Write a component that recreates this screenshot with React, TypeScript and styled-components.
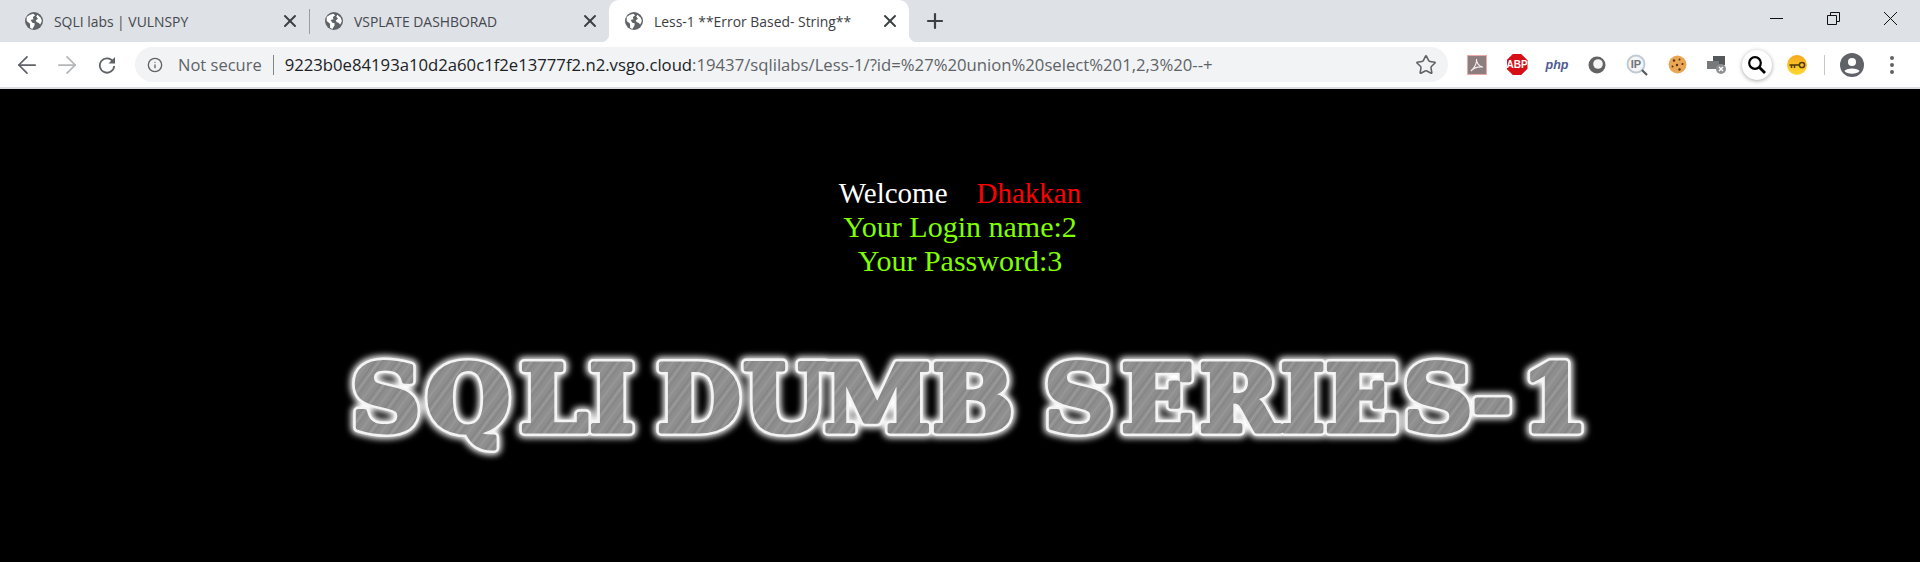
import styled, { createGlobalStyle } from 'styled-components'
import { ArrowLeft, ArrowRight, Info, Star, X, Plus } from 'lucide-react'

const GlobalStyle = createGlobalStyle`
  html, body {
    margin: 0;
    padding: 0;
    background: #000;
  }
`;

// Globe favicon chrome shows for pages without one
function Globe() {
  return (
    <svg width="18" height="18" viewBox="0 0 16 16">
      <circle cx="8" cy="8" r="8" fill="#5f6368" />
      <path d="M1.5 4.5 L4.5 2.5 L7.5 1.5 L9 3 L7 4.5 L7.5 6.5 L5 7 L6.5 9.5 L8.5 10 L8.5 12 L6.5 15 L4.5 14 L4.5 10.5 L1.5 8 Z" fill="#fff" />
      <path d="M11 2.5 L14 5 L15 8 L13.5 11 L12 9.5 L10.5 9 L9.5 7.5 L11.5 6 L10 4 Z" fill="#fff" />
    </svg>
  )
}

const tabs = [
  { title: 'SQLI labs | VULNSPY', active: false },
  { title: 'VSPLATE DASHBORAD', active: false },
  { title: 'Less-1 **Error Based- String**', active: true },
]

// glyph left edges measured off the screenshot, relative to the banner.
// the wordmark is wider than the font, so the text gets stretched a bit
const stretch = 1.05
const xs = [41, 116, 210, 279, 0, 347, 433, 514, 622, 0, 734, 811, 889, 970, 1015, 1093, 1162, 1211]
  .map(x => (x / stretch).toFixed(1))
  .join(' ')
const bannerTransform = `scale(${stretch} 1)`

function App() {
  return (
    <>
      <GlobalStyle />
      <Page>
        <TabStrip>
          {tabs.map((tab, i) => (
            <Tab key={tab.title} $active={tab.active} $divider={i === 1}>
              <Globe />
              <TabTitle $active={tab.active}>{tab.title}</TabTitle>
              <TabClose><X size={20} strokeWidth={2.4} /></TabClose>
            </Tab>
          ))}
          <NewTab><Plus size={24} strokeWidth={2.2} /></NewTab>
          <WindowControls>
            <WindowButton>
              <svg width="13" height="13" viewBox="0 0 13 13"><path d="M0 6.5 H13" stroke="#111" fill="none" /></svg>
            </WindowButton>
            <WindowButton>
              <svg width="13" height="13" viewBox="0 0 13 13"><path d="M0.5 3.5 H9.5 V12.5 H0.5 Z M3.5 3.5 V0.5 H12.5 V9.5 H9.5" stroke="#111" fill="none" /></svg>
            </WindowButton>
            <WindowButton>
              <svg width="13" height="13" viewBox="0 0 13 13"><path d="M0 0 L13 13 M13 0 L0 13" stroke="#111" fill="none" /></svg>
            </WindowButton>
          </WindowControls>
        </TabStrip>
        <Toolbar>
          <NavButton><ArrowLeft size={28} strokeWidth={1.5} /></NavButton>
          <NavButton $disabled><ArrowRight size={28} strokeWidth={1.5} /></NavButton>
          <NavButton>
            <svg width="18" height="18" viewBox="0 0 18 18">
              <path d="M15 5.5 A7.2 7.2 0 1 0 16.2 10" fill="none" stroke="currentColor" strokeWidth="1.8" />
              <path d="M17 1 V7.5 H10.5 Z" fill="currentColor" />
            </svg>
          </NavButton>
          <Omnibox>
            <Info size={16} strokeWidth={2} color="#5f6368" />
            <NotSecure>Not secure</NotSecure>
            <Sep />
            <Url>
              <b>9223b0e84193a10d2a60c1f2e13777f2.n2.vsgo.cloud</b>:19437/sqlilabs/Less-1/?id=%27%20union%20select%201,2,3%20--+
            </Url>
            <Star size={22} strokeWidth={1.7} color="#5f6368" />
          </Omnibox>
          <Extensions>
            <ExtSlot>
              <PdfIcon>
                <svg width="18" height="18" viewBox="0 0 18 18"><path d="M3 15 C6 12 9 7 8.5 3 C8 6 11 11 15 11 C11 10.5 6 11.5 3 15 Z" fill="none" stroke="#f2eeee" strokeWidth="1.1" /></svg>
              </PdfIcon>
            </ExtSlot>
            <ExtSlot><AbpIcon>ABP</AbpIcon></ExtSlot>
            <ExtSlot><PhpIcon>php</PhpIcon></ExtSlot>
            <ExtSlot>
              <svg width="18" height="18" viewBox="0 0 18 18">
                <circle cx="9" cy="9" r="8.5" fill="#636363" />
                <circle cx="10" cy="8" r="4.8" fill="#f5f5f5" />
              </svg>
            </ExtSlot>
            <ExtSlot>
              <svg width="22" height="22" viewBox="0 0 22 22">
                <circle cx="10" cy="10" r="8.5" fill="#f3f5f6" stroke="#bfcad3" strokeWidth="2" />
                <path d="M16 16 L21 21" stroke="#55595c" strokeWidth="2.2" />
                <IpLabel x="10" y="14">IP</IpLabel>
              </svg>
            </ExtSlot>
            <ExtSlot>
              <svg width="19" height="19" viewBox="0 0 19 19">
                <circle cx="9.5" cy="9.5" r="9" fill="#e9a653" />
                <circle cx="6" cy="5.5" r="1.2" fill="#5a330f" />
                <circle cx="11.5" cy="4.5" r="1" fill="#5a330f" />
                <circle cx="14.5" cy="9" r="1.1" fill="#5a330f" />
                <circle cx="9" cy="10" r="1.2" fill="#5a330f" />
                <circle cx="4.5" cy="11.5" r="1" fill="#5a330f" />
                <circle cx="11.5" cy="14.5" r="1.2" fill="#5a330f" />
              </svg>
            </ExtSlot>
            <ExtSlot>
              <svg width="20" height="20" viewBox="0 0 20 20">
                <rect x="6" y="1" width="12" height="9" fill="#55585b" />
                <rect x="0" y="6" width="12" height="8" fill="#777a7d" />
                <circle cx="14" cy="14" r="5" fill="#8d9093" />
                <path d="M12 12 L16 16 M16 12 L12 16" stroke="#fff" strokeWidth="1.4" />
              </svg>
            </ExtSlot>
            <ExtSlot>
              <SearchIcon>
                <svg width="20" height="20" viewBox="0 0 20 20"><circle cx="8" cy="8" r="5.8" fill="none" stroke="#000" strokeWidth="2.2" /><path d="M12 12 L18 18" stroke="#000" strokeWidth="2.8" /></svg>
              </SearchIcon>
            </ExtSlot>
            <ExtSlot>
              <KeyIcon>
                <svg width="17" height="8" viewBox="0 0 17 8"><circle cx="13" cy="4" r="2.6" fill="none" stroke="#4d3a00" strokeWidth="1.5" /><path d="M10 4 H0.5 M2.5 4 V7 M5.5 4 V7" stroke="#4d3a00" strokeWidth="1.5" /></svg>
              </KeyIcon>
            </ExtSlot>
            <ToolbarSep />
            <AvatarIcon>
              <svg width="24" height="24" viewBox="0 0 24 24"><circle cx="12" cy="12" r="12" fill="#5f6368" /><circle cx="12" cy="9" r="4" fill="#fff" /><path d="M4.5 18 C6 14.5 18 14.5 19.5 18 C17 21.5 7 21.5 4.5 18 Z" fill="#fff" /></svg>
            </AvatarIcon>
            <MenuDots><i /><i /><i /></MenuDots>
          </Extensions>
        </Toolbar>
        <Content>
          <Greeting>
            <WelcomeLine>
              <White>Welcome</White>
              <Gap />
              <Red>Dhakkan</Red>
            </WelcomeLine>
            <Green>Your Login name:2</Green>
            <Green>Your Password:3</Green>
          </Greeting>
          <Banner width="1300" height="130" viewBox="0 0 1300 130">
            <defs>
              <pattern id="brushed" width="17" height="17" patternUnits="userSpaceOnUse" patternTransform="rotate(35)">
                <rect width="17" height="17" fill="#8e8e8e" />
                <rect width="1" height="17" fill="#a0a0a0" />
                <rect x="3" width="1" height="17" fill="#838383" />
                <rect x="8" width="2" height="17" fill="#979797" />
                <rect x="14" width="1" height="17" fill="#808080" />
              </pattern>
              <filter id="glow" x="-5%" y="-30%" width="110%" height="160%">
                <feGaussianBlur in="SourceGraphic" stdDeviation="3" />
              </filter>
            </defs>
            <BannerGlow x={xs} y="95" transform={bannerTransform} filter="url(#glow)">SQLI DUMB SERIES-1</BannerGlow>
            <BannerEdge x={xs} y="95" transform={bannerTransform}>SQLI DUMB SERIES-1</BannerEdge>
            <BannerText x={xs} y="95" transform={bannerTransform}>SQLI DUMB SERIES-1</BannerText>
          </Banner>
        </Content>
      </Page>
    </>
  )
}

export default App

const Page = styled.div`
  width: 1920px;
  height: 562px;
  overflow: hidden;
  display: flex;
  flex-direction: column;
  font-family: "Open Sans", "Liberation Sans", sans-serif;
`;

const TabStrip = styled.div`
  height: 42px;
  flex: none;
  background: #dee1e6;
  display: flex;
  align-items: flex-end;
  padding-left: 9px;
`;

const Tab = styled.div<{ $active: boolean; $divider: boolean }>`
  position: relative;
  width: 300px;
  height: ${p => (p.$active ? '42px' : '34px')};
  margin-bottom: ${p => (p.$active ? '0' : '4px')};
  display: flex;
  align-items: center;
  box-sizing: border-box;
  padding: 0 9px 0 16px;
  background: ${p => (p.$active ? '#fff' : 'transparent')};
  border-radius: ${p => (p.$active ? '10px 10px 0 0' : '0')};

  ${p => p.$divider && `
    &::before {
      content: '';
      position: absolute;
      left: 0;
      top: 5px;
      width: 1px;
      height: 25px;
      background: #9a9da1;
    }
  `}

  ${p => p.$active && `
    &::before, &::after {
      content: '';
      position: absolute;
      bottom: 0;
      width: 8px;
      height: 8px;
    }
    &::before {
      left: -8px;
      background: radial-gradient(circle at 0 0, transparent 8px, #fff 8.5px);
    }
    &::after {
      right: -8px;
      background: radial-gradient(circle at 100% 0, transparent 8px, #fff 8.5px);
    }
  `}
`;

const TabTitle = styled.span<{ $active: boolean }>`
  flex: 1;
  margin-left: 11px;
  font-size: 13.9px;
  color: ${p => (p.$active ? '#3c4043' : '#45484d')};
  white-space: nowrap;
`;

const TabClose = styled.span`
  display: flex;
  color: #3c4043;
`;

const NewTab = styled.div`
  display: flex;
  align-self: center;
  margin-left: 14px;
  color: #3c4043;
`;

const WindowControls = styled.div`
  margin-left: auto;
  align-self: flex-start;
  display: flex;
  padding-right: 1px;
`;

const WindowButton = styled.div`
  width: 57px;
  height: 36px;
  display: flex;
  align-items: center;
  justify-content: center;
`;

const Toolbar = styled.div`
  height: 47px;
  flex: none;
  box-sizing: border-box;
  background: #fff;
  border-bottom: 2px solid #dadce0;
  display: flex;
  align-items: center;
  padding-left: 7px;
`;

const NavButton = styled.div<{ $disabled?: boolean }>`
  width: 40px;
  display: flex;
  justify-content: center;
  color: ${p => (p.$disabled ? '#b4b6b9' : '#5f6368')};
`;

const Omnibox = styled.div`
  width: 1313px;
  height: 35px;
  margin-left: 8px;
  box-sizing: border-box;
  padding: 0 11px 0 12px;
  background: #f1f3f4;
  border-radius: 18px;
  display: flex;
  align-items: center;
`;

const NotSecure = styled.span`
  margin-left: 15px;
  font-size: 16.5px;
  color: #5f6368;
`;

const Sep = styled.span`
  width: 1px;
  height: 20px;
  margin: 0 11px;
  background: #80868b;
`;

const Url = styled.span`
  flex: 1;
  font-size: 16.7px;
  color: #5f6368;
  white-space: nowrap;

  b {
    font-weight: 400;
    color: #202124;
  }
`;

const Extensions = styled.div`
  display: flex;
  align-items: center;
  margin-left: 9px;
`;

const ExtSlot = styled.div`
  width: 40px;
  height: 32px;
  flex: none;
  display: flex;
  align-items: center;
  justify-content: center;
`;

const PdfIcon = styled.div`
  width: 20px;
  height: 20px;
  box-sizing: border-box;
  display: flex;
  align-items: center;
  justify-content: center;
  background: #8c7e7e;
  border: 1px solid #eda9a9;
`;

const AbpIcon = styled.div`
  width: 21px;
  height: 21px;
  display: flex;
  align-items: center;
  justify-content: center;
  background: #d70f17;
  clip-path: polygon(30% 0, 70% 0, 100% 30%, 100% 70%, 70% 100%, 30% 100%, 0 70%, 0 30%);
  color: #fff;
  font: 700 10px "Liberation Sans", sans-serif;
`;

const PhpIcon = styled.div`
  color: #4f5b93;
  font: italic 700 12.5px "Liberation Sans", sans-serif;
`;

const IpLabel = styled.text`
  fill: #6f7479;
  font: 700 11px "Liberation Sans", sans-serif;
  text-anchor: middle;
`;

const SearchIcon = styled.div`
  width: 30px;
  height: 30px;
  flex: none;
  display: flex;
  align-items: center;
  justify-content: center;
  border-radius: 50%;
  background: #fff;
  box-shadow: 0 1px 4px rgba(0, 0, 0, 0.35);
`;

const KeyIcon = styled.div`
  width: 20px;
  height: 20px;
  display: flex;
  align-items: center;
  justify-content: center;
  border-radius: 50%;
  background: linear-gradient(#f6a81e, #ffd92f);
`;

const ToolbarSep = styled.div`
  width: 1px;
  height: 20px;
  margin: 0 15px 0 7px;
  background: #c4c7c9;
`;

const AvatarIcon = styled.div`
  display: flex;
  margin-right: 26px;
`;

const MenuDots = styled.div`
  display: flex;
  flex-direction: column;
  gap: 3px;

  i {
    width: 4px;
    height: 4px;
    border-radius: 50%;
    background: #5f6368;
  }
`;

const Content = styled.div`
  flex: 1;
  background: #000;
  display: flex;
  flex-direction: column;
  align-items: center;
`;

const Greeting = styled.div`
  margin-top: 87px;
  font: 30px/34px "Liberation Serif", serif;
  text-align: center;
`;

const WelcomeLine = styled.div`
  font-size: 29px;
`;

const White = styled.span`
  color: #fff;
`;

const Red = styled.span`
  color: #f00;
`;

const Gap = styled.span`
  display: inline-block;
  width: 29px;
`;

const Green = styled.div`
  color: #7fff00;
`;

const Banner = styled.svg`
  margin-top: 58px;
  flex: none;
`;

const BannerText = styled.text`
  font: 700 92px "DejaVu Serif", serif;
  fill: url(#brushed);
  stroke: url(#brushed);
  stroke-width: 5;
  stroke-linejoin: round;
`;

const BannerEdge = styled.text`
  font: 700 92px "DejaVu Serif", serif;
  fill: #fff;
  stroke: #f4f4f4;
  stroke-width: 10;
  stroke-linejoin: round;
`;

const BannerGlow = styled.text`
  font: 700 92px "DejaVu Serif", serif;
  fill: #fff;
  stroke: #fff;
  stroke-width: 14;
  stroke-linejoin: round;
`;
